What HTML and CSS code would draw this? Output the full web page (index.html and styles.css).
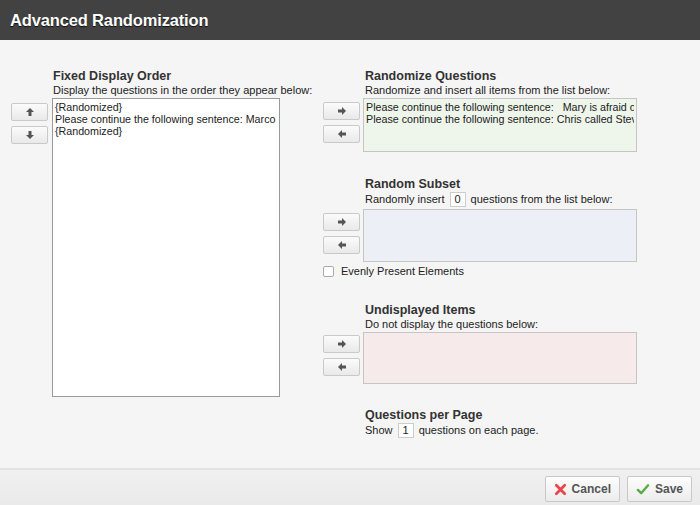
FILE: index.html
```html
<!DOCTYPE html>
<html>
<head>
<meta charset="utf-8">
<link rel="stylesheet" href="styles.css">
</head>
<body>
<div class="dialog">
  <header class="titlebar"><h1>Advanced Randomization</h1></header>
  <main class="main">
    <section class="group left">
      <div class="btncol">
        <button class="arrow"><svg viewBox="0 0 10 10" width="10" height="10"><path d="M5 1 L9 5 L6.5 5 L6.5 9 L3.5 9 L3.5 5 L1 5 Z" fill="#555"/></svg></button>
        <button class="arrow"><svg viewBox="0 0 10 10" width="10" height="10"><path d="M5 9 L9 5 L6.5 5 L6.5 1 L3.5 1 L3.5 5 L1 5 Z" fill="#555"/></svg></button>
      </div>
      <div class="content">
        <h2>Fixed Display Order</h2>
        <p class="sub">Display the questions in the order they appear below:</p>
        <div class="list fixed">
          <div class="item">{Randomized}</div>
          <div class="item">Please continue the following sentence: Marco was walking</div>
          <div class="item">{Randomized}</div>
        </div>
      </div>
    </section>
    <div class="right">
      <section class="group sec-rand">
        <div class="btncol">
          <button class="arrow"><svg viewBox="0 0 10 10" width="10" height="10"><path d="M9 5 L5 1 L5 3.5 L1 3.5 L1 6.5 L5 6.5 L5 9 Z" fill="#555"/></svg></button>
          <button class="arrow"><svg viewBox="0 0 10 10" width="10" height="10"><path d="M1 5 L5 1 L5 3.5 L9 3.5 L9 6.5 L5 6.5 L5 9 Z" fill="#555"/></svg></button>
        </div>
        <div class="content">
          <h2>Randomize Questions</h2>
          <p class="sub">Randomize and insert all items from the list below:</p>
          <div class="list green">
            <div class="item">Please continue the following sentence: &nbsp; Mary is afraid of</div>
            <div class="item">Please continue the following sentence: Chris called Steve</div>
          </div>
        </div>
      </section>
      <section class="group sec-subset">
        <div class="btncol">
          <button class="arrow"><svg viewBox="0 0 10 10" width="10" height="10"><path d="M9 5 L5 1 L5 3.5 L1 3.5 L1 6.5 L5 6.5 L5 9 Z" fill="#555"/></svg></button>
          <button class="arrow"><svg viewBox="0 0 10 10" width="10" height="10"><path d="M1 5 L5 1 L5 3.5 L9 3.5 L9 6.5 L5 6.5 L5 9 Z" fill="#555"/></svg></button>
        </div>
        <div class="content">
          <h2>Random Subset</h2>
          <p class="sub">Randomly insert <span class="num">0</span> questions from the list below:</p>
          <div class="list blue"></div>
        </div>
      </section>
      <label class="check"><span class="box"></span>Evenly Present Elements</label>
      <section class="group sec-undisp">
        <div class="btncol">
          <button class="arrow"><svg viewBox="0 0 10 10" width="10" height="10"><path d="M9 5 L5 1 L5 3.5 L1 3.5 L1 6.5 L5 6.5 L5 9 Z" fill="#555"/></svg></button>
          <button class="arrow"><svg viewBox="0 0 10 10" width="10" height="10"><path d="M1 5 L5 1 L5 3.5 L9 3.5 L9 6.5 L5 6.5 L5 9 Z" fill="#555"/></svg></button>
        </div>
        <div class="content">
          <h2>Undisplayed Items</h2>
          <p class="sub">Do not display the questions below:</p>
          <div class="list pink"></div>
        </div>
      </section>
      <section class="group sec-perpage">
        <div class="btncol"></div>
        <div class="content">
          <h2>Questions per Page</h2>
          <p class="sub">Show <span class="num">1</span> questions on each page.</p>
        </div>
      </section>
    </div>
  </main>
  <footer class="footer">
    <button class="action"><svg viewBox="0 0 14 14" width="13" height="13"><path d="M2.5 2.5 L11.5 11.5 M11.5 2.5 L2.5 11.5" stroke="#e9474c" stroke-width="3" stroke-linecap="round"/></svg>Cancel</button>
    <button class="action"><svg viewBox="0 0 14 14" width="14" height="13"><path d="M1.5 7.5 L5 11 L12.5 2.5" stroke="#5aaa48" stroke-width="2.6" fill="none" stroke-linecap="round" stroke-linejoin="round"/></svg>Save</button>
  </footer>
</div>
</body>
</html>
```
FILE: styles.css
```css
* { box-sizing: border-box; }
html, body { margin: 0; padding: 0; }
body {
  width: 700px;
  height: 505px;
  overflow: hidden;
  font-family: "Liberation Sans", Arial, sans-serif;
  background: #f5f5f5;
  color: #222;
}
.dialog {
  display: flex;
  flex-direction: column;
  height: 505px;
}
.titlebar {
  height: 40px;
  background: #424242;
  padding: 0 10px;
  display: flex;
  align-items: center;
  flex: none;
}
.titlebar h1 {
  margin: 0;
  font-size: 16.5px;
  font-weight: bold;
  color: #fff;
  text-shadow: 0 1px 1px #111;
  letter-spacing: -0.15px;
}
.main {
  flex: 1;
  display: flex;
  padding: 29px 0 0 11px;
}
.group {
  display: flex;
  gap: 4px;
}
.btncol {
  width: 37px;
  flex: none;
  display: flex;
  flex-direction: column;
  gap: 5px;
  padding-top: 34px;
}
.arrow {
  width: 37px;
  height: 18px;
  padding: 0;
  border: 1px solid #c9c9c9;
  border-radius: 2px;
  background: linear-gradient(#fbfbfb, #e9e9e9);
  display: flex;
  align-items: center;
  justify-content: center;
}
.arrow svg { display: block; }
h2 {
  margin: 0;
  padding-left: 1px;
  font-size: 12.5px;
  line-height: 14px;
  font-weight: bold;
  color: #333;
  white-space: nowrap;
}
.sub {
  margin: 0;
  padding-left: 1px;
  font-size: 11px;
  line-height: 14px;
  color: #222;
  white-space: nowrap;
}
.right h2, .right .sub { padding-left: 2px; }
.left .content { width: 228px; }
.list {
  margin-top: 1px;
  overflow: hidden;
  white-space: nowrap;
  font-size: 10.7px;
  line-height: 12px;
  padding: 2px 2px;
}
.list .item { overflow: hidden; }
.fixed {
  height: 299px;
  background: #fff;
  border: 1px solid #9a9a9a;
}
.right {
  margin-left: 43px;
  display: flex;
  flex-direction: column;
}
.right .group { gap: 3px; }
.right .content { width: 274px; }
.green { height: 54px; background: #eef5ea; border: 1px solid #c5c5c5; }
.blue { height: 53px; background: #eceff6; border: 1px solid #c5c5c5; }
.pink { height: 52px; background: #f6ebea; border: 1px solid #c5c5c5; }
.sec-rand .btncol { padding-top: 33px; }
.sec-subset { margin-top: 25px; }
.sec-subset .sub { line-height: 16px; }
.sec-subset .list { margin-top: 2px; }
.sec-subset .btncol { padding-top: 36px; }
.num {
  display: inline-block;
  width: 16px;
  height: 15px;
  line-height: 13px;
  vertical-align: middle;
  background: #fff;
  border: 1px solid #ccc;
  text-align: center;
  margin: -2px 2px 0;
  font-size: 11px;
}
.check {
  display: flex;
  align-items: center;
  gap: 7px;
  font-size: 11px;
  margin-top: 3px;
  height: 12px;
}
.check .box {
  width: 11px;
  height: 11px;
  border: 1px solid #aaa;
  border-radius: 2px;
  background: #fff;
}
.sec-undisp { margin-top: 26px; }
.sec-undisp .btncol { padding-top: 32px; }
.sec-perpage { margin-top: 24px; }
.sec-perpage .sub { line-height: 17px; }
.footer {
  height: 37px;
  flex: none;
  border-top: 2px solid #e2e2e2;
  background: linear-gradient(#f0f0f0, #eaeaea);
  display: flex;
  justify-content: flex-end;
  align-items: flex-start;
  gap: 7px;
  padding: 6px 8px 0 0;
}
.action {
  height: 26px;
  padding: 0 8px;
  border: 1px solid #c8c8c8;
  border-radius: 2px;
  background: linear-gradient(#fdfdfd, #ececec);
  font-family: "Liberation Sans", Arial, sans-serif;
  font-size: 12px;
  font-weight: bold;
  color: #555;
  display: flex;
  align-items: center;
  gap: 5px;
}
```
